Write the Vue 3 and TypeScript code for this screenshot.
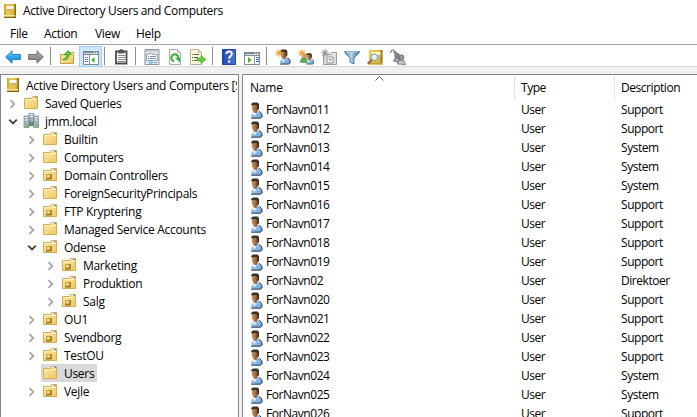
<script setup lang="ts">
interface TreeNode { label: string; level: number; icon: 'folder' | 'ou' | 'domain' | 'root'; state?: 'open' | 'closed'; selected?: boolean }
interface Row { name: string; description: string }

const menus = ['File', 'Action', 'View', 'Help']
const tools = ['back', 'forward', '|', 'up', 'tree', '|', 'clip', '|', 'props', 'refresh', 'export', '|', 'help', 'pane', '|', 'user', 'group', 'ou', 'filter', 'find', 'members']

const tree: TreeNode[] = [
  { label: 'Active Directory Users and Computers [S', level: 0, icon: 'root' },
  { label: 'Saved Queries', level: 1, icon: 'folder', state: 'closed' },
  { label: 'jmm.local', level: 1, icon: 'domain', state: 'open' },
  { label: 'Builtin', level: 2, icon: 'folder', state: 'closed' },
  { label: 'Computers', level: 2, icon: 'folder', state: 'closed' },
  { label: 'Domain Controllers', level: 2, icon: 'ou', state: 'closed' },
  { label: 'ForeignSecurityPrincipals', level: 2, icon: 'folder', state: 'closed' },
  { label: 'FTP Kryptering', level: 2, icon: 'ou', state: 'closed' },
  { label: 'Managed Service Accounts', level: 2, icon: 'folder', state: 'closed' },
  { label: 'Odense', level: 2, icon: 'ou', state: 'open' },
  { label: 'Marketing', level: 3, icon: 'ou', state: 'closed' },
  { label: 'Produktion', level: 3, icon: 'ou', state: 'closed' },
  { label: 'Salg', level: 3, icon: 'ou', state: 'closed' },
  { label: 'OU1', level: 2, icon: 'ou', state: 'closed' },
  { label: 'Svendborg', level: 2, icon: 'ou', state: 'closed' },
  { label: 'TestOU', level: 2, icon: 'ou', state: 'closed' },
  { label: 'Users', level: 2, icon: 'folder', selected: true },
  { label: 'Vejle', level: 2, icon: 'ou', state: 'closed' },
]

const rows: Row[] = [
  ['011', 'Support'], ['012', 'Support'], ['013', 'System'], ['014', 'System'], ['015', 'System'],
  ['016', 'Support'], ['017', 'Support'], ['018', 'Support'], ['019', 'Support'], ['02', 'Direktoer'],
  ['020', 'Support'], ['021', 'Support'], ['022', 'Support'], ['023', 'Support'], ['024', 'System'],
  ['025', 'System'], ['026', 'Support'],
].map(([n, description]) => ({ name: 'ForNavn' + n, description }))
</script>

<template>
  <div class="window">
    <svg class="defs" width="0" height="0">
      <defs>
        <linearGradient id="gBlue" x1="0" y1="0" x2="0" y2="1"><stop offset="0" stop-color="#8fdcfa" /><stop offset=".5" stop-color="#2ca7ec" /><stop offset="1" stop-color="#1c86d2" /></linearGradient>
        <linearGradient id="gGray" x1="0" y1="0" x2="0" y2="1"><stop offset="0" stop-color="#b5b5b5" /><stop offset="1" stop-color="#777" /></linearGradient>
        <linearGradient id="gFold" x1="0" y1="0" x2="1" y2="1"><stop offset="0" stop-color="#ffeaa8" /><stop offset="1" stop-color="#efc765" /></linearGradient>
        <linearGradient id="gGold" x1="0" y1="0" x2="1" y2="0"><stop offset="0" stop-color="#ecc94e" /><stop offset=".75" stop-color="#dfbd4a" /><stop offset="1" stop-color="#80620c" /></linearGradient>
        <linearGradient id="gHelp" x1="0" y1="0" x2="1" y2="0"><stop offset="0" stop-color="#1b3e9c" /><stop offset=".2" stop-color="#2c55bd" /><stop offset="1" stop-color="#4673d4" /></linearGradient>
        <linearGradient id="gFace" x1="0" y1="0" x2="1" y2="0"><stop offset="0" stop-color="#c99765" /><stop offset=".5" stop-color="#a87146" /><stop offset="1" stop-color="#4d3221" /></linearGradient>
        <linearGradient id="gShirt" x1="0" y1="0" x2="1" y2="1"><stop offset="0" stop-color="#a9d2f7" /><stop offset="1" stop-color="#6e9fd2" /></linearGradient>
        <linearGradient id="gFunnel" x1="0" y1="0" x2="1" y2="0"><stop offset="0" stop-color="#5a8fb7" /><stop offset=".45" stop-color="#b4d6ea" /><stop offset="1" stop-color="#2e5f88" /></linearGradient>
      </defs>
      <symbol id="i-root" viewBox="0 0 14 16">
        <path d="M1 1h12v14H1z" fill="url(#gGold)" /><path d="M1 1h2v14H1z" fill="#d7ab2c" /><path d="M1 13.5h12V15H1z" fill="#80640f" />
        <path d="M3.500 3h7v4h-7z" fill="#fffbea" /><path d="M3.500 6.300h7V7h-7z" fill="#aa8829" /><path d="M1 12h11v1.500H1z" fill="#f7e49a" />
      </symbol>
      <symbol id="i-folder" viewBox="0 0 16 16">
        <path d="M1.500 3.500h7l1-2h5v12h-13z" fill="url(#gFold)" stroke="#d3ac55" />
        <path d="M10 2.500h4" stroke="#fff" /><path d="M12.300 2.500h1.800" stroke="#3c8cdc" /><path d="M2 4.500h12" stroke="#fff0bd" />
      </symbol>
      <symbol id="i-ou" viewBox="0 0 16 16">
        <use href="#i-folder" /><path d="M4 7h5.500v5H4z" fill="#c9a43e" /><path d="M4 12h5.200V7" fill="none" stroke="#79600f" stroke-width=".9" /><path d="M5 8.200h2.800v2H5z" fill="#f4e09a" />
      </symbol>
      <symbol id="i-domain" viewBox="0 0 16 16">
        <path d="M6 .5h5V9H6zM1 3h5v11.500H1zM10.500 3h5v11.500h-5z" fill="#a3b1bc" stroke="#7c8790" stroke-width=".7" />
        <path d="M6.700 1.500h3.500M6.700 3.500h3.500M1.700 4.500h3.500M1.700 7h3.500M11.300 4.500h3.500M11.300 7h3.500" stroke="#e8f1f7" />
        <path d="M6 9h4.500v4H6z" fill="#687681" /><path d="M3.500 12h2v2h-2zM7.500 9.500h1.800v1.800H7.500zM13 12h2v2h-2z" fill="#3bdc16" />
      </symbol>
      <symbol id="i-person" viewBox="0 0 13 17">
        <path d="M1.500 16.200 1.200 13l2.300-2.500L6.500 8.800l2.800.4 2.400 2.300.6 3.300-2 1.500z" fill="url(#gShirt)" />
        <path d="M1.200 16.200h9l2-1.500-.5-3-2.300-2.400" fill="none" stroke="#1c2b3b" stroke-width=".9" />
        <path d="M1.700 2.500 3.500 1h3.600l1.600 2v3.700L7.300 8.800 6 11.500 3.500 10 2 7.200z" fill="url(#gFace)" />
        <path d="M1.300 3.200V1.700L3 .5h4.500L9 2v5L7.800 8.500V4.500L6.300 2.900z" fill="#37312c" /><path d="m2.800 10.500 1.700 3.800 2-3.200-1.700.1z" fill="#f0f8ff" />
      </symbol>
      <symbol id="i-star" viewBox="0 0 9 9"><path d="M4.500 0v9M0 4.500h9M1.300 1.300l6.400 6.400M7.700 1.300 1.300 7.700" stroke="currentColor" stroke-width="1" /><circle cx="4.500" cy="4.500" r="2" fill="currentColor" /></symbol>
      <symbol id="i-back" viewBox="0 0 16 16"><path d="M.6 8 7 1.800v3.700h8.400v5H7v3.700z" fill="url(#gBlue)" stroke="#1975b7" stroke-width=".9" /></symbol>
      <symbol id="i-forward" viewBox="0 0 16 16"><path d="M15.400 8 9 1.800v3.700H.6v5H9v3.700z" fill="url(#gGray)" stroke="#666" stroke-width=".9" /></symbol>
      <symbol id="i-up" viewBox="0 0 16 16">
        <path d="M1.500 5.500h6l1.500-2h5.500v11h-13z" fill="url(#gFold)" stroke="#c89f45" /><path d="M11 4.500h3" stroke="#fff" />
        <path d="M3.500 10.500c3-.5 4-2 4-5H5.500L9 1.500l3.300 4H10c0 4-2.500 6-6.500 5z" fill="#55cf38" stroke="#279017" stroke-width=".7" />
      </symbol>
      <symbol id="i-tree" viewBox="0 0 16 16">
        <path d="M.5 2.500h15v13H.5z" fill="#fff" stroke="#7e8a94" /><path d="M0 2h16v4H0z" fill="#7d8993" /><path d="M1 4.500h14" stroke="#d4dce1" /><path d="M11 3.300h1M13 3.300h1" stroke="#fff" />
        <path d="M6.500 6v9" stroke="#8e9aa5" /><path d="M2 8.500h3M2 10.500h3M2 12.500h3" stroke="#3270be" stroke-dasharray="1 .7 2" /><path d="M11.500 8v6L8.300 11z" fill="#3cb51f" />
      </symbol>
      <symbol id="i-clip" viewBox="0 0 16 16">
        <path d="M3 2.500h10.500v12H3z" fill="#fff" stroke="#4b4b4b" stroke-width="1.800" /><path d="M5.500 1h5.500v3.500H5.500z" fill="#555" /><path d="M7 0h2.500v1H7z" fill="#777" /><path d="M5 6.500h7M5 8.500h7M5 10.500h7M5 12.500h7" stroke="#888" />
      </symbol>
      <symbol id="i-props" viewBox="0 0 16 16">
        <path d="M1 .5h14v15H1z" fill="#e3e8ec" stroke="#87929c" /><path d="M2 2h12" stroke="#a6b6c3" /><path d="M2.500 5.500h2v-1h4v1h5v6h-11z" fill="#fff" stroke="#9aa9b7" /><path d="M4 7.500h1M6 7.500h6M4 9.500h1M6 9.500h6" stroke="#7f91a1" /><path d="M5 13.500h4" stroke="#52c6ec" stroke-width="2" /><path d="M10 13.500h3" stroke="#8b9cac" />
      </symbol>
      <symbol id="i-refresh" viewBox="0 0 16 16">
        <path d="M2.500.5h8l3 3v12h-11z" fill="#fafafa" stroke="#a7abb0" /><path d="M10.500.5v3h3" fill="#e0e3e5" stroke="#b7bbc0" /><path d="M7 12.200a3.500 3.500 0 1 1 4.200-2.500" fill="none" stroke="#34af37" stroke-width="2" /><path d="M8 9h5v4.500z" fill="#34af37" />
      </symbol>
      <symbol id="i-export" viewBox="0 0 16 16">
        <path d="M.5.5h8l3 3v12H.5z" fill="#fff8d5" stroke="#bbb193" /><path d="M8.500.5v3h3" fill="#e9e1c4" stroke="#bbb193" /><path d="M2 5.500h1M4 5.500h5M2 8.500h1M4 8.500h4M2 11.500h1M4 11.500h4" stroke="#565d62" /><path d="M7 9h4V6.500l4.700 4-4.700 4V12H7z" fill="#63d337" stroke="#36aa24" stroke-width=".7" />
      </symbol>
      <symbol id="i-help" viewBox="0 0 16 16">
        <path d="M1.500.5h13v15h-13z" fill="url(#gHelp)" stroke="#25479c" /><path d="M5.300 5.200C5 1.500 11 1.600 10.800 5c-.1 2-2.600 2-2.600 4.800" fill="none" stroke="#fff" stroke-width="2" /><path d="M7 11.500h2.300v2H7z" fill="#fff" />
      </symbol>
      <symbol id="i-pane" viewBox="0 0 16 16">
        <path d="M.5 3.500h15v12H.5z" fill="#fff" stroke="#7e8a94" /><path d="M0 3h16v4H0z" fill="#7d8993" /><path d="M1 5.500h14" stroke="#d4dce1" /><path d="M11 4.200h1M13 4.200h1" stroke="#fff" /><path d="M10.500 6v9" stroke="#8e9aa5" /><path d="M12 8.500h3M12 10.500h3M12 12.500h3" stroke="#3270be" /><path d="M4 8v6l3.500-3z" fill="#3cb51f" />
      </symbol>
      <symbol id="i-user" viewBox="0 0 16 16"><use href="#i-person" x="4" y="0" width="12" height="16" /><use href="#i-star" width="8" height="8" class="orange" /></symbol>
      <symbol id="i-group" viewBox="0 0 16 16">
        <path d="m2 13 2-4h4l2 5z" fill="#5ab249" stroke="#27772b" stroke-width=".6" /><circle cx="6.500" cy="7" r="2.400" fill="#c99560" /><use href="#i-person" x="7.500" y="3.500" width="9" height="12.500" /><use href="#i-star" width="8" height="8" class="orange" />
      </symbol>
      <symbol id="i-newou" viewBox="0 0 16 16">
        <path d="M2.500 5.500h7l1-2h5v12h-13z" fill="#ddd" stroke="#999" /><path d="M6 8h6v6H6z" fill="#eee" stroke="#999" /><path d="M8 10h2v1H8z" fill="#666" /><path d="M11 4.500h3" stroke="#fff" /><use href="#i-star" width="8" height="8" class="gray" />
      </symbol>
      <symbol id="i-filter" viewBox="0 0 16 16"><path d="M.7 2.500h14.600v1L10 9v6l-4-1.700V9L.7 3.500z" fill="url(#gFunnel)" stroke="#386b94" stroke-width=".8" /><path d="M1.800 3h12.400" stroke="#c4e4f7" /></symbol>
      <symbol id="i-find" viewBox="0 0 16 16">
        <path d="M2 1h13.500v14.500H2z" fill="url(#gGold)" /><path d="M4.500 3h9v3h-9z" fill="#fff6c7" /><path d="M2 13.500h13.500v2H2z" fill="#c3a03a" /><path d="M5.300 10.500.7 14.700" stroke="#8a6746" stroke-width="2" /><circle cx="7.300" cy="8.300" r="3.300" fill="#dcf4ff" stroke="#8295a1" />
      </symbol>
      <symbol id="i-members" viewBox="0 0 16 16">
        <g stroke="#666" stroke-width=".8"><path d="M3.500 12 5 9h4l1.500 4.500z" fill="#aaa" /><circle cx="7" cy="6.500" r="2.300" fill="#888" /><path d="m7.500 15 1.500-4h4.500l2 4.500z" fill="#c5c5c5" /><circle cx="11.500" cy="8.300" r="2.500" fill="#999" /></g><path d="M.5 4c.5-4 4.500-4 4.500 0M3.300 2.800 5 4.500l1.700-2" fill="none" stroke="#777" stroke-width="1.100" />
      </symbol>
    </svg>

    <header class="title"><svg class="app-icon"><use href="#i-root" /></svg><span>Active Directory Users and Computers</span></header>
    <nav class="menu"><span v-for="m in menus" :key="m" :class="m.toLowerCase()">{{ m }}</span></nav>
    <div class="toolbar">
      <template v-for="(t, i) in tools" :key="i">
        <i v-if="t === '|'" class="sep"></i>
        <span v-else class="tool" :class="{ active: t === 'tree' }"><svg><use :href="t === 'ou' ? '#i-newou' : '#i-' + t" /></svg></span>
      </template>
    </div>
    <main class="panes">
      <section class="tree">
        <div v-for="n in tree" :key="n.label" class="node" :class="'l' + n.level">
          <span v-if="n.level" class="twist">
            <svg v-if="n.state === 'closed'" viewBox="0 0 8 10"><path d="m1.500 1.200 3.800 3.800-3.800 3.800" fill="none" stroke="#a6a6a6" stroke-width="1.800" /></svg>
            <svg v-else-if="n.state === 'open'" class="open" viewBox="0 0 10 8"><path d="m1.200 1.700 3.800 3.800 3.800-3.800" fill="none" stroke="#404040" stroke-width="1.900" /></svg>
          </span>
          <span class="item" :class="{ selected: n.selected }"><svg :class="n.icon"><use :href="'#i-' + n.icon" /></svg><span>{{ n.label }}</span></span>
        </div>
      </section>
      <section class="list">
        <div class="head">
          <span>Name</span><span>Type</span><span>Description</span>
          <svg class="sort" viewBox="0 0 9 5"><path d="m.5 4.500 4-4 4 4" fill="none" stroke="#666" /></svg>
        </div>
        <div v-for="r in rows" :key="r.name" class="row">
          <span class="name"><svg><use href="#i-person" /></svg>{{ r.name }}</span><span>User</span><span>{{ r.description }}</span>
        </div>
      </section>
    </main>
  </div>
</template>

<style>
body { margin: 0; overflow: hidden; background: #fff; }
</style>
<style scoped>
.window { width: 697px; height: 417px; display: flex; flex-direction: column; overflow: hidden; background: #fff; color: #000; font: 12px/18px "Open Sans", "Noto Sans", sans-serif; letter-spacing: -0.3px; white-space: nowrap; }
.defs { position: absolute; }
svg { display: block; flex: none; }
.title { height: 22px; display: flex; align-items: center; padding-left: 3px; gap: 6px; flex: none; letter-spacing: -0.36px; }
.app-icon { width: 14px; height: 16px; }
.menu { height: 22px; display: flex; align-items: center; padding: 1px 0 0 10px; box-sizing: border-box; flex: none; }
.file { width: 34px; }
.action { width: 51px; }
.view { width: 41px; }
.toolbar { height: 23px; box-sizing: border-box; display: flex; border-top: 1px solid #a6a6a6; border-bottom: 1px solid #d9d9d9; padding: 1px 0 0 2px; flex: none; }
.tool { width: 23px; height: 21px; box-sizing: border-box; padding: 3px 4px 2px 3px; }
.tool svg { width: 16px; height: 16px; }
.active { background: #cce8ff; border: 1px solid #99d1ff; padding: 2px 3px 1px; }
.sep { width: 1px; height: 18px; margin: 1px 5px 0 2px; background: #8c8c8c; }
.orange { color: #f5a01d; }
.gray { color: #929292; }
.panes { flex: 1; min-height: 0; display: flex; gap: 3px; padding-top: 7px; background: #f0f0f0; }
.tree { width: 239px; box-sizing: border-box; border: 1px solid #828790; border-width: 1px 1px 0 1px; background: #fff; overflow: hidden; padding-top: 1px; }
.node { height: 18px; display: flex; }
.l0 { padding-left: 4px; }
.l1 { padding-left: 6px; }
.l2 { padding-left: 25px; }
.l3 { padding-left: 44px; }
.twist { width: 15px; display: flex; align-items: center; padding: 1px 0 0 2px; box-sizing: border-box; }
.twist svg { width: 8px; height: 10px; }
.twist .open { width: 10px; height: 8px; margin-left: -1px; }
.item { display: flex; align-items: center; padding: 0 3px 0 1px; gap: 6px; }
.item > span { padding-top: 1px; }
.item svg { width: 16px; height: 16px; }
.item .root { width: 14px; }
.l0 .item { width: 232px; box-sizing: border-box; padding-right: 0; overflow: hidden; letter-spacing: -0.28px; }
.selected { background: #d9d9d9; }
.list { flex: 1; box-sizing: border-box; border-left: 1px solid #828790; border-top: 1px solid #828790; background: #fff; overflow: hidden; letter-spacing: -0.45px; }
.head, .row { display: grid; grid-template-columns: 272px 100px 1fr; }
.head { position: relative; height: 24px; padding-top: 1px; box-sizing: border-box; margin-bottom: 1px; }
.head span { border-right: 1px solid #e2e2e2; padding: 3px 0 0 6px; }
.head span:first-child { padding-left: 7px; letter-spacing: -0.2px; }
.head span:last-of-type { border: 0; }
.sort { position: absolute; left: 132px; top: 1px; width: 9px; height: 5px; }
.row { height: 19px; line-height: 20px; }
.row > span { padding-left: 6px; }
.row > .name { display: flex; align-items: center; padding-left: 7px; gap: 3px; }
.name svg { width: 13px; height: 17px; }
</style>
